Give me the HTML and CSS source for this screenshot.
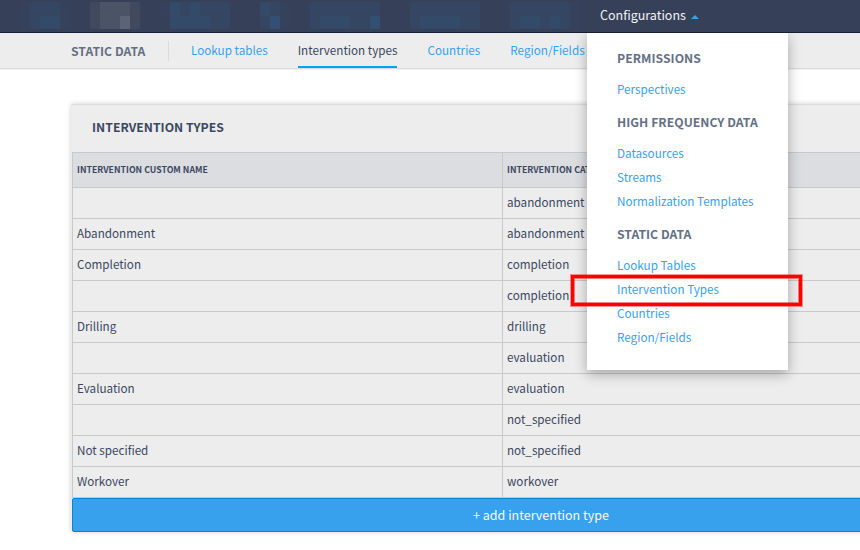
FILE: index.html
```html
<!DOCTYPE html>
<html lang="en">
<head>
<meta charset="utf-8">
<title>Intervention types</title>
<link rel="stylesheet" href="styles.css">
</head>
<body>
<header class="topbar">
  <svg class="mosaic" width="580" height="33" viewBox="0 0 580 33" shape-rendering="crispEdges" aria-hidden="true">
    <g fill="#36425c"><path d="M20 2h10v27H20zM60 2h10v27H60zM160 2h10v14H160zM220 16h10v13H220zM280 2h10v27H280zM570 2h10v27H570z"/></g>
    <g fill="#344662"><path d="M30 2h30v27H30zM170 2h60v27H170zM260 2h20v27H260zM310 2h70v27H310zM410 2h70v27H410zM510 2h60v27H510z"/></g>
    <g fill="#344a69"><path d="M40 16h20v13H40zM170 2h10v14H170zM190 2h10v14H190zM170 16h40v13H170zM260 2h10v14H260zM320 16h30v13H320zM420 16h40v13H420zM520 16h20v13H520zM550 16h10v13H550z"/></g>
    <g fill="#335072"><path d="M270 16h10v13H270zM370 16h10v13H370z"/></g>
    <path fill="#41495f" d="M90 2h50v27H90z"/>
    <path fill="#4b5367" d="M100 2h30v27H100z"/>
    <path fill="#5b6376" d="M120 16h10v13H120z"/>
  </svg>
  <a class="topbar-link">Configurations<i class="caret"></i></a>
</header>
<nav class="subnav">
  <h2 class="subnav-title">STATIC DATA</h2>
  <a class="tab">Lookup tables</a>
  <a class="tab tab-active">Intervention types</a>
  <a class="tab">Countries</a>
  <a class="tab">Region/Fields</a>
</nav>
<main class="content">
  <section class="panel">
    <h1 class="panel-title">INTERVENTION TYPES</h1>
    <div class="table">
      <div class="row head"><span>INTERVENTION CUSTOM NAME</span><span>INTERVENTION CATEGORY</span></div>
      <div class="row"><span></span><span>abandonment</span></div>
      <div class="row"><span>Abandonment</span><span>abandonment</span></div>
      <div class="row"><span>Completion</span><span>completion</span></div>
      <div class="row"><span></span><span>completion</span></div>
      <div class="row"><span>Drilling</span><span>drilling</span></div>
      <div class="row"><span></span><span>evaluation</span></div>
      <div class="row"><span>Evaluation</span><span>evaluation</span></div>
      <div class="row"><span></span><span>not_specified</span></div>
      <div class="row"><span>Not specified</span><span>not_specified</span></div>
      <div class="row"><span>Workover</span><span>workover</span></div>
    </div>
    <button class="add">+ add intervention type</button>
  </section>
</main>
<aside class="menu">
  <h3>PERMISSIONS</h3>
  <a>Perspectives</a>
  <h3>HIGH FREQUENCY DATA</h3>
  <a>Datasources</a>
  <a>Streams</a>
  <a>Normalization Templates</a>
  <h3>STATIC DATA</h3>
  <a>Lookup Tables</a>
  <a>Intervention Types</a>
  <a>Countries</a>
  <a>Region/Fields</a>
</aside>
<div class="highlight"></div>
</body>
</html>
```
FILE: styles.css
```css
* { box-sizing: border-box; }
body {
  margin: 0;
  width: 860px;
  height: 550px;
  overflow: hidden;
  position: relative;
  background: #fff;
  color: #3b4761;
  font: 11.68px/20px "Noto Sans CJK SC", "Noto Sans", sans-serif;
}
h1, h2, h3 {
  margin: 0;
  font-size: 12.2px;
  font-weight: 700;
  letter-spacing: .04px;
  white-space: nowrap;
}
.topbar {
  display: flex;
  height: 33px;
  background: #364059;
  border-bottom: 1px solid #141f38;
}
.mosaic { flex: none; }
.topbar-link {
  display: flex;
  align-items: center;
  margin-left: 20px;
  height: 30px;
  font-size: 12.5px;
  color: #f1f3f6;
}
.caret {
  margin: 3px 0 0 5px;
  border: 4px solid transparent;
  border-top: 0;
  border-bottom-color: #38a1ee;
}
.subnav {
  display: flex;
  align-items: flex-start;
  height: 36px;
  padding-left: 71px;
  background: #ededed;
  border-bottom: 1px solid #dadbe0;
  box-shadow: 0 1px 1px rgba(0, 0, 0, .05);
}
.subnav-title {
  width: 98px;
  height: 20px;
  margin: 8px 22px 0 0;
  border-right: 1px solid #dadbe0;
  line-height: 21px;
  color: #656f86;
}
.tab {
  flex: none;
  height: 35px;
  margin-right: 30px;
  line-height: 34px;
  color: #38a1ee;
}
.tab-active { color: #3b4761; border-bottom: 2px solid #00a2f2; }
.content {
  height: 481px;
  padding: 35px 0 0 71px;
  overflow: hidden;
}
.panel {
  width: 939px;
  padding-left: 1px;
  background: #ededed;
  border-top: 1px solid #d9dddd;
  border-radius: 3px;
  box-shadow: 0 0 5px rgba(0, 0, 0, .2);
}
.panel-title {
  height: 47px;
  padding-left: 20px;
  line-height: 44px;
}
.table { border: 1px solid #c8c9ca; border-bottom: 0; }
.row {
  display: grid;
  grid-template-columns: 430px 1fr;
  height: 31px;
  line-height: 28px;
  border-bottom: 1px solid #c8c9ca;
}
.row span { padding-left: 4px; }
.row span:first-child { border-right: 1px solid #c8c9ca; }
.head {
  height: 35px;
  line-height: 34px;
  font-size: 8.75px;
  font-weight: 700;
  background: #dcdde1;
}
.add {
  display: block;
  width: 100%;
  height: 34px;
  padding: 0 0 1px;
  border: 1px solid #0088d0;
  border-radius: 2px;
  background: #38a1ee;
  color: #f4f9fe;
  font: inherit;
  font-size: 12.5px;
}
.menu {
  position: absolute;
  left: 587px;
  top: 33px;
  width: 201px;
  height: 337px;
  padding: 14px 30px 0;
  background: #fff;
  box-shadow: 0 4px 12px rgba(0, 0, 0, .3);
  clip-path: inset(0 -30px -30px -30px);
}
.menu h3 {
  height: 24px;
  margin-bottom: 7px;
  line-height: 22px;
  color: #656f86;
}
.menu a {
  display: block;
  height: 24px;
  line-height: 22px;
  color: #38a1ee;
  white-space: nowrap;
}
.menu a + h3 { margin-top: 9px; }
.highlight {
  position: absolute;
  left: 571px;
  top: 275px;
  width: 231px;
  height: 31px;
  border: 3px solid #f00;
  box-shadow: 0 0 0 1px rgba(255, 0, 0, .4), inset 0 0 0 1px rgba(255, 0, 0, .5);
}
```
